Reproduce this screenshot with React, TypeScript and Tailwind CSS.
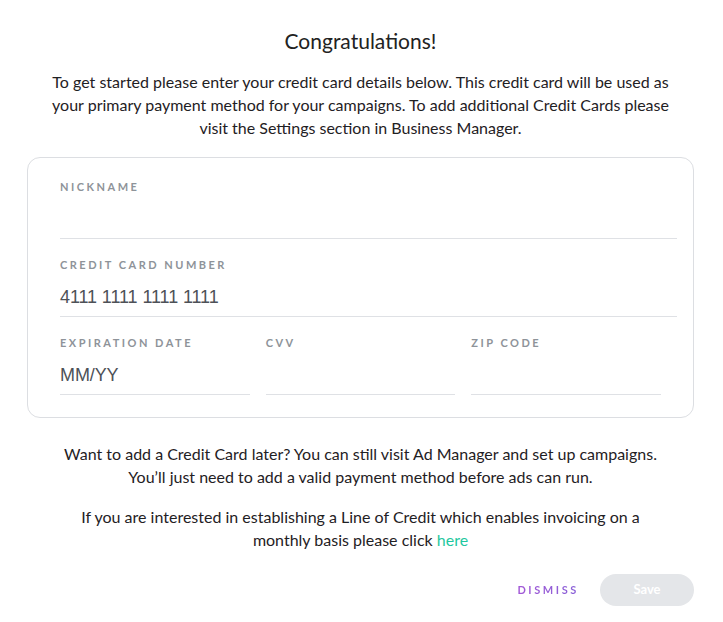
import React from 'react';

const Field: React.FC<{ label: string; value?: string; className?: string }> = ({ label, value, className }) => (
  <div className={`flex flex-col ${className ?? ''}`}>
    <label className="text-[11px] font-bold tracking-[2.5px] text-[#8e9399] uppercase leading-none">
      {label}
    </label>
    <div className="h-[47px] flex items-end pb-[8px] border-b border-[#dfe1e5] text-[18px] leading-[22px] text-[#4d5157] font-['Liberation_Sans',sans-serif] tracking-[-0.1px]">
      {value}
    </div>
  </div>
);

export default function App() {
  return (
    <div className="w-[723px] h-[622px] bg-white font-['Lato',sans-serif] text-[#1f2124]">
      <div className="pl-[27px] pr-[29px] pt-[28px] flex flex-col items-center">
        <h1 className="text-[21px] leading-[26px] text-[#222]">Congratulations!</h1>
        <p className="mt-[16px] w-[630px] text-center text-[16px] leading-[23px]">
          To get started please enter your credit card details below. This credit card will be used as your primary
          payment method for your campaigns. To add additional Credit Cards please visit the Settings section in
          Business Manager.
        </p>

        <div className="mt-[18px] w-full border border-[#dcdee2] rounded-[13px] pl-[32px] pr-[16px] pt-[23px] pb-[22px] flex flex-col gap-[20px]">
          <Field label="Nickname" />
          <Field label="Credit Card Number" value="4111 1111 1111 1111" />
          <div className="flex gap-[16px] pr-[16px]">
            <Field label="Expiration Date" value="MM/YY" className="flex-1" />
            <Field label="CVV" className="flex-1" />
            <Field label="Zip Code" className="flex-1" />
          </div>
        </div>

        <p className="mt-[24px] text-center text-[16px] leading-[23px]">
          Want to add a Credit Card later? You can still visit Ad Manager and set up campaigns.
          <br />
          You’ll just need to add a valid payment method before ads can run.
        </p>
        <p className="mt-[17px] w-[570px] text-center text-[16px] leading-[23px]">
          If you are interested in establishing a Line of Credit which enables invoicing on a monthly basis please click{' '}
          <a className="text-[#1fc8a0] cursor-pointer">here</a>
        </p>

        <div className="mt-[23px] w-full flex justify-end items-center gap-[21px]">
          <button className="text-[11px] font-bold tracking-[2.6px] text-transparent bg-clip-text bg-gradient-to-r from-[#a257d6] to-[#8a63d8]">
            DISMISS
          </button>
          <button className="w-[94px] h-[32px] rounded-full bg-[#e4e6e9] text-white text-[13px] font-bold">
            Save
          </button>
        </div>
      </div>
    </div>
  );
}
